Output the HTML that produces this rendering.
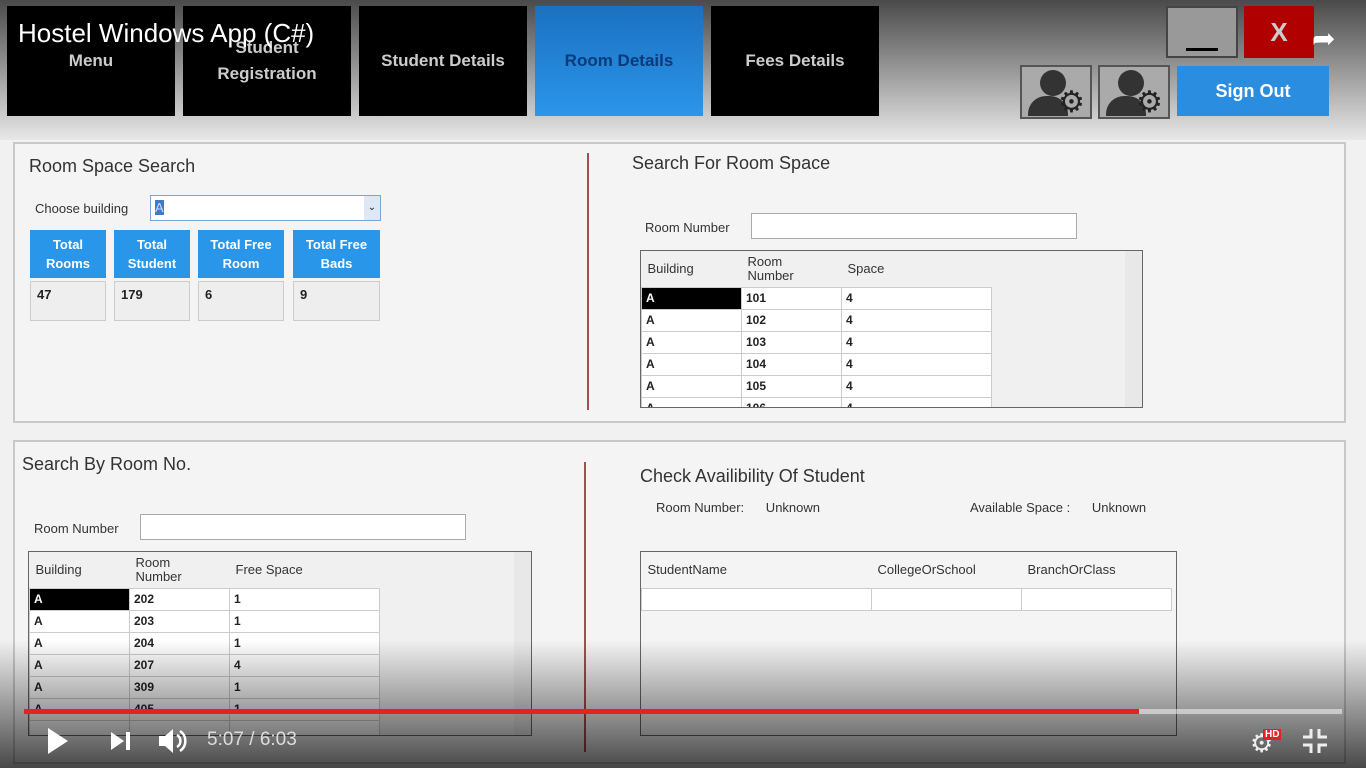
<!DOCTYPE html>
<html><head><meta charset="utf-8"><style>
*{margin:0;padding:0;box-sizing:border-box}
body{width:1366px;height:768px;overflow:hidden;background:#f1f1f1;font-family:"Liberation Sans",sans-serif;position:relative;color:#222}
.a{position:absolute}
.tab{position:absolute;top:6px;height:110px;background:#000;color:#ccc;font-weight:bold;font-size:17px;text-align:center;display:flex;align-items:center;justify-content:center;line-height:26px}
.panel{position:absolute;border:2px solid #c8c8c8;background:#f4f4f4}
.h{font-size:18px;color:#333}
.lbl{font-size:13px;color:#333}
.inp{position:absolute;background:#fff;border:1px solid #aaa;height:26px}
.bb{position:absolute;background:#2a96ea;color:#fff;font-weight:bold;font-size:13px;text-align:center;line-height:19px;padding-top:5px;height:48px}
.bv{position:absolute;background:#eee;border:1px solid #ccc;font-weight:bold;font-size:13px;padding:5px 0 0 6px;height:40px;top:281px}
.grid{position:absolute;background:#f0f0f0;border:1px solid #666}
.grid table{border-collapse:collapse;font-size:12px;table-layout:fixed}
.grid td{border:1px solid #ccc;background:#fff;height:22px;padding-left:4px;font-weight:bold}
.grid th{font-weight:normal;text-align:left;padding-left:6px;font-size:13px;color:#333;height:36px;line-height:14px}
.sb{position:absolute;right:0;top:0;bottom:0;width:17px;background:#e8e8e8}
.vl{position:absolute;width:2px;background:#a05050}
</style></head><body>
<div class="a" style="left:0;top:0;width:1366px;height:140px;background:linear-gradient(#4a4a4a,#888 40%,#e8e8e8 100%)"></div>
<div class="tab" style="left:7px;width:168px">Menu</div>
<div class="tab" style="left:183px;width:168px">Student<br>Registration</div>
<div class="tab" style="left:359px;width:168px">Student Details</div>
<div class="tab" style="left:535px;width:168px;background:linear-gradient(#1c70c0,#2a96ea);color:#0a3a7a">Room Details</div>
<div class="tab" style="left:711px;width:168px">Fees Details</div>
<div class="a" style="left:18px;top:18px;color:#fff;font-size:26px">Hostel Windows App (C#)</div>
<div class="a" style="left:1166px;top:6px;width:72px;height:52px;background:#999;border:2px solid #444"><div class="a" style="left:18px;top:40px;width:32px;height:3px;background:#000"></div></div>
<div class="a" style="left:1244px;top:6px;width:70px;height:52px;background:#b00000;color:#ccc;font-weight:bold;font-size:26px;text-align:center;line-height:52px">X</div>
<div class="a" style="left:1312px;top:22px;color:#fff;font-size:28px">➦</div>
<div class="a" style="left:1020px;top:65px;width:72px;height:54px;background:#aaa;border:2px solid #555"></div>
<div class="a" style="left:1098px;top:65px;width:72px;height:54px;background:#aaa;border:2px solid #555"></div>
<div class="a" style="left:1040px;top:70px;width:26px;height:26px;border-radius:50%;background:#333"></div>
<div class="a" style="left:1118px;top:70px;width:26px;height:26px;border-radius:50%;background:#333"></div>
<div class="a" style="left:1028px;top:96px;width:40px;height:20px;border-radius:18px 18px 0 0;background:#333"></div>
<div class="a" style="left:1106px;top:96px;width:40px;height:20px;border-radius:18px 18px 0 0;background:#333"></div>
<div class="a" style="left:1058px;top:88px;font-size:30px;color:#222;line-height:30px">⚙</div>
<div class="a" style="left:1136px;top:88px;font-size:30px;color:#222;line-height:30px">⚙</div>
<div class="a" style="left:1177px;top:66px;width:152px;height:50px;background:#2a8de0;color:#fff;font-weight:bold;font-size:18px;text-align:center;line-height:50px">Sign Out</div>

<div class="panel" style="left:13px;top:142px;width:1333px;height:281px"></div>
<div class="a h" style="left:29px;top:156px">Room Space Search</div>
<div class="a lbl" style="left:35px;top:201px">Choose building</div>
<div class="inp" style="left:150px;top:195px;width:231px;border-color:#7aa7d8"><span style="background:#3a7bd5;color:#cde;font-size:13px;margin:4px;display:inline-block">A</span><div class="a" style="right:0;top:0;width:16px;height:24px;background:#dde8f4;font-size:10px;text-align:center;line-height:24px">⌄</div></div>
<div class="bb" style="left:30px;top:230px;width:76px">Total<br>Rooms</div>
<div class="bb" style="left:114px;top:230px;width:76px">Total<br>Student</div>
<div class="bb" style="left:198px;top:230px;width:86px">Total Free<br>Room</div>
<div class="bb" style="left:293px;top:230px;width:87px">Total Free<br>Bads</div>
<div class="bv" style="left:30px;width:76px">47</div>
<div class="bv" style="left:114px;width:76px">179</div>
<div class="bv" style="left:198px;width:86px">6</div>
<div class="bv" style="left:293px;width:87px">9</div>
<div class="vl" style="left:587px;top:153px;height:257px"></div>
<div class="a h" style="left:632px;top:153px">Search For Room Space</div>
<div class="a lbl" style="left:645px;top:220px">Room Number</div>
<div class="inp" style="left:751px;top:213px;width:326px"></div>
<div class="grid" style="left:640px;top:250px;width:503px;height:158px;overflow:hidden"><table style="width:350px">
<col style="width:100px"><col style="width:100px"><col style="width:150px">
<tr><th>Building</th><th>Room<br>Number</th><th>Space</th></tr>
<tr><td style="background:#000;color:#fff">A</td><td>101</td><td>4</td></tr>
<tr><td>A</td><td>102</td><td>4</td></tr><tr><td>A</td><td>103</td><td>4</td></tr>
<tr><td>A</td><td>104</td><td>4</td></tr><tr><td>A</td><td>105</td><td>4</td></tr><tr><td>A</td><td>106</td><td>4</td></tr></table><div class="sb"></div></div>

<div class="panel" style="left:13px;top:440px;width:1333px;height:324px"></div>
<div class="a h" style="left:22px;top:454px">Search By Room No.</div>
<div class="a lbl" style="left:34px;top:521px">Room Number</div>
<div class="inp" style="left:140px;top:514px;width:326px"></div>
<div class="grid" style="left:28px;top:551px;width:504px;height:185px;overflow:hidden"><table style="width:350px">
<col style="width:100px"><col style="width:100px"><col style="width:150px">
<tr><th>Building</th><th>Room<br>Number</th><th>Free Space</th></tr>
<tr><td style="background:#000;color:#fff">A</td><td>202</td><td>1</td></tr>
<tr><td>A</td><td>203</td><td>1</td></tr><tr><td>A</td><td>204</td><td>1</td></tr>
<tr><td>A</td><td>207</td><td>4</td></tr><tr><td>A</td><td>309</td><td>1</td></tr><tr><td>A</td><td>405</td><td>1</td></tr><tr><td></td><td></td><td></td></tr></table><div class="sb"></div></div>
<div class="vl" style="left:584px;top:462px;height:290px"></div>
<div class="a h" style="left:640px;top:466px">Check Availibility Of Student</div>
<div class="a lbl" style="left:656px;top:500px">Room Number:&nbsp;&nbsp;&nbsp;&nbsp;&nbsp;&nbsp;Unknown</div>
<div class="a lbl" style="left:970px;top:500px">Available Space :&nbsp;&nbsp;&nbsp;&nbsp;&nbsp;&nbsp;Unknown</div>
<div class="grid" style="left:640px;top:551px;width:537px;height:185px;background:#f4f4f4"><table style="width:530px">
<col style="width:230px"><col style="width:150px"><col style="width:150px">
<tr><th>StudentName</th><th>CollegeOrSchool</th><th>BranchOrClass</th></tr>
<tr><td></td><td></td><td></td></tr></table></div>

<div class="a" style="left:0;top:640px;width:1366px;height:128px;background:linear-gradient(rgba(0,0,0,0),rgba(0,0,0,.7))"></div>
<div class="a" style="left:24px;top:709px;width:1318px;height:5px;background:rgba(255,255,255,.5)"></div>
<div class="a" style="left:24px;top:709px;width:1115px;height:5px;background:#e52222"></div>
<svg class="a" style="left:46px;top:727px" width="24" height="28"><path d="M2 1L22 14L2 27Z" fill="#fff"/></svg>
<svg class="a" style="left:110px;top:731px" width="22" height="20"><path d="M1 1L14 10L1 19Z" fill="#fff"/><rect x="16" y="1" width="4" height="18" fill="#fff"/></svg>
<svg class="a" style="left:158px;top:727px" width="30" height="28"><path d="M1 9h6l8-7v24l-8-7H1Z" fill="#fff"/><path d="M19 8a7 7 0 010 12M22 4a12 12 0 010 20" stroke="#fff" stroke-width="2.5" fill="none"/></svg>
<div class="a" style="left:207px;top:729px;color:#ddd;font-size:19px">5:07 / 6:03</div>
<div class="a" style="left:1250px;top:728px;color:#eee;font-size:26px">⚙</div>
<div class="a" style="left:1263px;top:729px;background:#d22;color:#fff;font-size:10px;font-weight:bold;padding:0 2px">HD</div>
<svg class="a" style="left:1302px;top:728px" width="26" height="26" fill="none" stroke="#eee" stroke-width="3"><path d="M9 1v8H1M17 1v8h8M9 25v-8H1M17 25v-8h8"/></svg>
</body></html>
